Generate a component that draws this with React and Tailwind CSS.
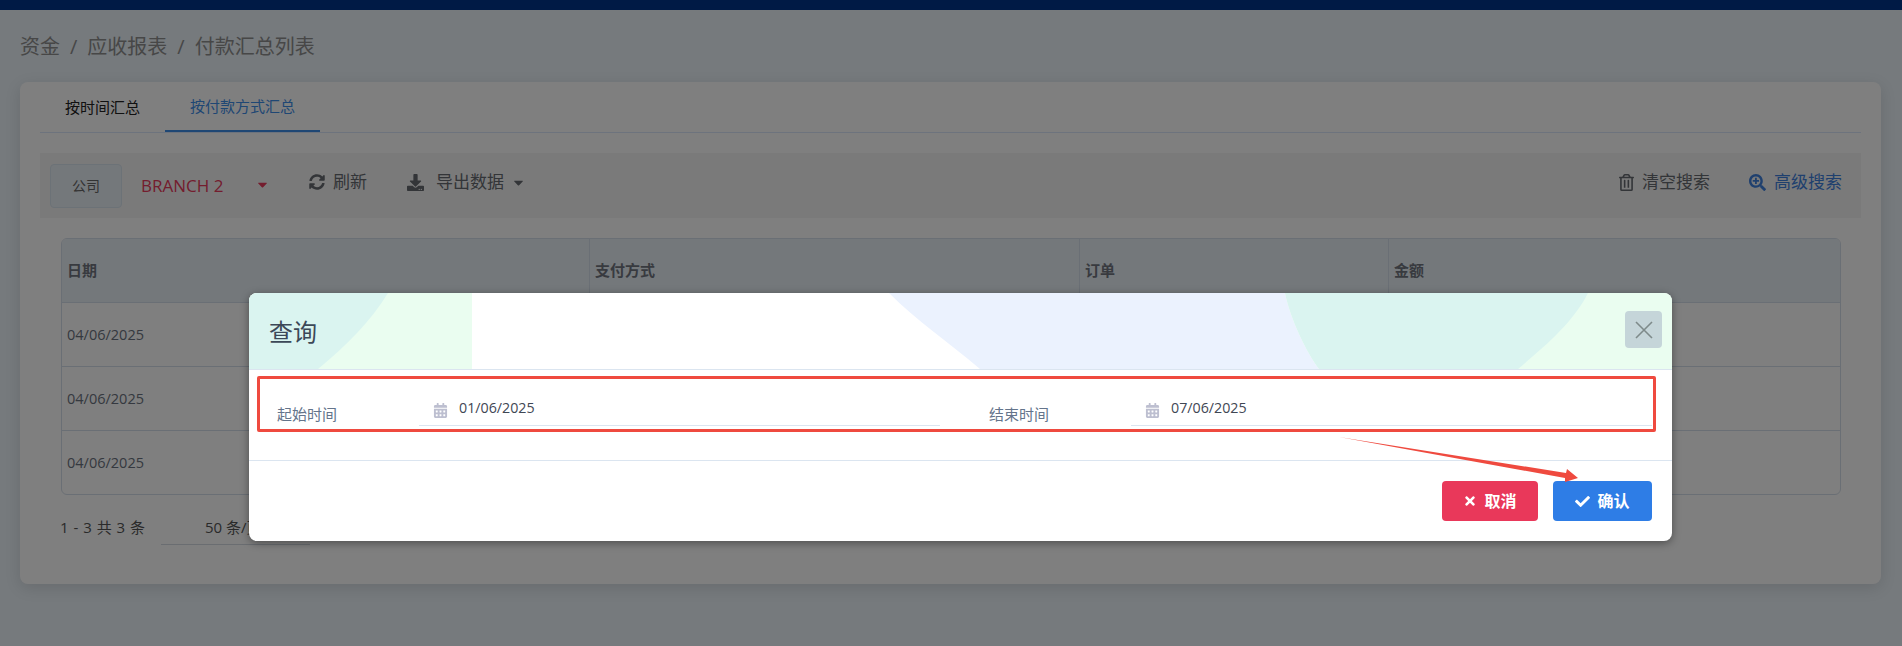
import React from "react";
import { FaSyncAlt, FaDownload, FaCaretDown, FaRegTrashAlt, FaSearchPlus, FaCalendarAlt, FaCheck, FaTimes } from "react-icons/fa";

const font = { fontFamily: '"Open Sans","Noto Sans CJK SC",sans-serif' };
const cols = "grid grid-cols-[527px_490px_309px_1fr]";

function Row({ last }) {
  return (
    <div className={`${cols} ${last ? "h-[63px]" : "h-[64px] border-b border-[#d5deea]"} items-center text-[14.5px] text-[#6b7280]`}>
      <div className="pl-[5px]">04/06/2025</div>
      <div />
      <div />
      <div />
    </div>
  );
}

function DateField({ label, value, className }) {
  return (
    <div className={`flex items-end ${className}`}>
      <div className="w-[142px] shrink-0 text-[15px] leading-[24px] text-[#64748b]">{label}</div>
      <div className="flex-1 h-[32px] border-b border-[#dbe5f0] flex items-center pb-[3px] pl-[14px]">
        <FaCalendarAlt className="text-[15px] text-[#bdbfd0] mt-[5px]" />
        <span className="ml-[11px] text-[14.25px] text-[#3f4754]">{value}</span>
      </div>
    </div>
  );
}

export default function App() {
  return (
    <div className="relative h-[646px] w-[1902px] overflow-hidden bg-[#ecf4fa]" style={font}>
      <div className="h-[10px] bg-[#00358a]" />
      <div className="pl-[20px] h-[72px] flex items-center pt-[1px] text-[20px] text-[#8e8e8e] gap-[10px]">
        <span>资金</span><span>/</span><span>应收报表</span><span>/</span><span>付款汇总列表</span>
      </div>
      <div className="ml-[20px] w-[1861px] h-[502px] bg-white rounded-[8px] shadow-[0_4px_16px_rgba(0,0,0,0.12)] px-[20px]">
        <div className="h-[51px] border-b border-[#dbe6fb] flex text-[15px]">
          <div className="h-[50px] w-[125px] flex items-center justify-center text-[#222]">按时间汇总</div>
          <div className="h-[50px] w-[155px] flex items-center justify-center text-[#3f8ee8] border-b-2 border-[#3f8ee8]">按付款方式汇总</div>
        </div>
        <div className="mt-[20px] h-[65px] bg-[#f5f5f5] px-[10px] flex items-center">
          <div className="w-[72px] h-[44px] rounded-[4px] border border-[#d8e4ee] bg-[#e9f0f6] flex items-center justify-center text-[14px] text-[#666]">公司</div>
          <div className="ml-[19px] w-[84px] text-[17px] font-medium text-[#e83a5c] whitespace-nowrap">BRANCH 2</div>
          <FaCaretDown className="ml-[30px] text-[15px] text-[#e83a5c] mb-[3px]" />
          <div className="ml-[39px] flex items-center mb-[7px] text-[17px] text-[#666a70]">
            <FaSyncAlt className="text-[16px]" />
            <span className="ml-[8px]">刷新</span>
          </div>
          <div className="ml-[40px] flex items-center mb-[7px] text-[17px] text-[#666a70]">
            <FaDownload className="text-[17px]" />
            <span className="ml-[12px]">导出数据</span>
            <FaCaretDown className="ml-[7px] text-[15px]" />
          </div>
          <div className="ml-auto flex items-center mb-[7px] text-[17px] text-[#666a70]">
            <FaRegTrashAlt className="text-[17px]" />
            <span className="ml-[7px]">清空搜索</span>
          </div>
          <div className="ml-[39px] mr-[9px] flex items-center mb-[7px] text-[17px] text-[#3f80dd]">
            <FaSearchPlus className="text-[17px]" />
            <span className="ml-[8px]">高级搜索</span>
          </div>
        </div>
        <div className="mt-[20px] ml-[21px] mr-[20px] border border-[#d5deea] rounded-[6px] overflow-hidden">
          <div className={`${cols} h-[64px] bg-[#e8f0f6] border-b border-[#d5deea] text-[15px] font-bold text-[#70757f]`}>
            <div className="pl-[5px] flex items-center">日期</div>
            <div className="pl-[5px] flex items-center border-l border-[#d5deea]">支付方式</div>
            <div className="pl-[5px] flex items-center border-l border-[#d5deea]">订单</div>
            <div className="pl-[5px] flex items-center border-l border-[#d5deea]">金额</div>
          </div>
          <Row />
          <Row />
          <Row last />
        </div>
        <div className="ml-[20px] mt-[22px] flex text-[15px] text-[#555]">
          <span className="w-[100px] leading-[20px] whitespace-nowrap tracking-[0.5px]">1 - 3 共 3 条</span>
          <div className="ml-[1px] w-[149px] h-[28px] border-b border-[#d5dae3] pl-[44px] leading-[20px]">50 条/页</div>
        </div>
      </div>

      <div className="absolute inset-0 bg-black/50">
        <div className="ml-[249px] mt-[293px] w-[1423px] h-[248px] bg-white rounded-[8px] shadow-[0_2px_8px_rgba(0,0,0,0.4)] overflow-hidden">
          <div className="relative h-[77px] border-b border-[#dbe5f0] flex items-center justify-between pl-[20px] pr-[10px]">
            <svg className="absolute left-0 top-0" width="1423" height="76" viewBox="0 0 1423 76">
              <rect x="0" y="0" width="223" height="76" fill="#eafdf0" />
              <path d="M0 0H139C122 28 98 52 69 76H0Z" fill="#daf4f0" />
              <path d="M640 0H1036C1042 28 1058 60 1070 76H731C698 48 668 28 640 0Z" fill="#ebf2fe" />
              <path d="M1036 0H1423V76H1070C1058 60 1042 28 1036 0Z" fill="#eafdf0" />
              <path d="M1036 0H1339C1324 30 1295 54 1269 76H1070C1058 60 1042 28 1036 0Z" fill="#daf4f0" />
            </svg>
            <span className="relative text-[24px] text-[#3c4858] pt-[1px]">查询</span>
            <div className="relative w-[37px] h-[37px] rounded-[4px] bg-[#c5d5d9] flex items-center justify-center mt-[-3px]">
              <svg width="20" height="20" viewBox="0 0 20 20" stroke="#7e8a8a" strokeWidth="1.6" fill="none"><path d="M2 2 18 18M18 2 2 18" /></svg>
            </div>
          </div>
          <div className="h-[91px] border-b border-[#dbe5f0] pt-[24px] pl-[28px] flex items-start">
            <DateField label="起始时间" value="01/06/2025" className="w-[663px] mr-[49px]" />
            <DateField label="结束时间" value="07/06/2025" className="w-[663px]" />
          </div>
          <div className="flex justify-end gap-[15px] pt-[20px] pr-[20px]">
            <div className="w-[96px] h-[40px] rounded-[4px] bg-[#e9385a] text-white font-bold text-[16px] flex items-center justify-center gap-[7px]">
              <FaTimes className="text-[14px]" /><span>取消</span>
            </div>
            <div className="w-[99px] h-[40px] rounded-[4px] bg-[#2e7de6] text-white font-bold text-[16px] flex items-center justify-center gap-[7px]">
              <FaCheck className="text-[15px]" /><span>确认</span>
            </div>
          </div>
        </div>
      </div>

      <div className="absolute left-[257px] top-[376px] w-[1399px] h-[56px] border-[3px] border-[#ef4a3f] rounded-[2px]" />
      <svg className="absolute left-0 top-0 pointer-events-none" width="1902" height="646" viewBox="0 0 1902 646">
        <polygon points="1339,437 1566,473 1567,469 1578,478 1565,482 1565,478" fill="#ef4a3f" />
      </svg>
    </div>
  );
}
